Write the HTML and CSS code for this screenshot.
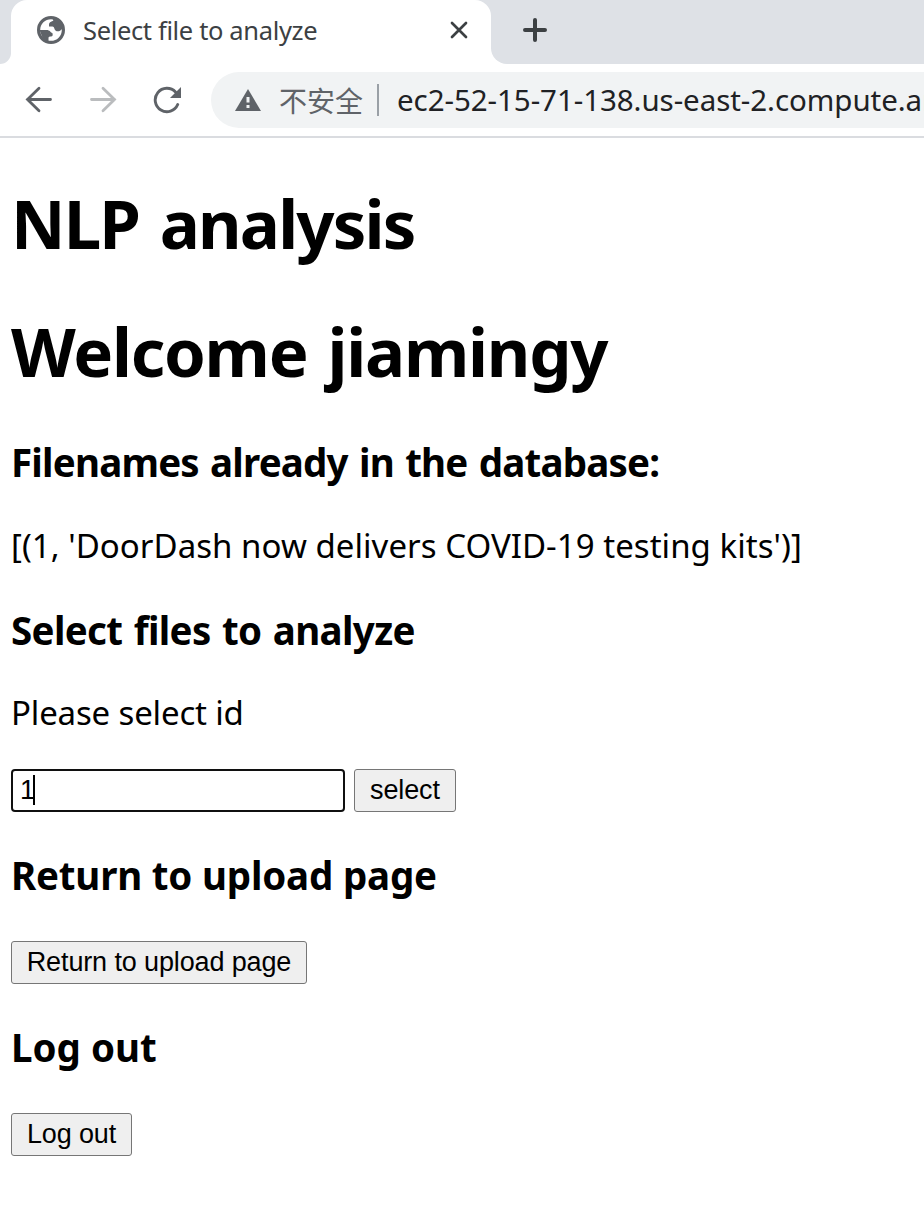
FILE: index.html
```html
<!DOCTYPE html>
<html lang="en">
<head>
<meta charset="utf-8">
<title>Select file to analyze</title>
<link rel="stylesheet" href="styles.css">
</head>
<body>
<header class="browser">
  <div class="strip">
    <div class="prev-tab"></div>
    <div class="tab">
      <svg class="globe" width="28" height="28" viewBox="0 0 28 28"><circle cx="14" cy="14" r="12.400" fill="#fff" stroke="#5f6368" stroke-width="3.200"/><path d="M15.500 2L16.300 4.800C13.500 5.500 12 6.800 12 8.500V10.500H15.500C17.500 10.500 17.200 13.500 18.500 14.500C20.500 16 23 15.500 25 13L26 8L21 3Z" fill="#5f6368"/><path d="M2.500 14H9.500C13 14 13.500 16.500 15.500 17.200C16 19.500 15.500 20.500 14 20.500C12 20.500 11.500 21 11.500 22V25.500L6 23Z" fill="#5f6368"/></svg>
      <span class="tab-title">Select file to analyze</span>
      <svg class="close" width="18" height="18" viewBox="0 0 18 18"><path d="M2 2L16 16M16 2L2 16" stroke="#3c4043" stroke-width="2.700" stroke-linecap="round"/></svg>
    </div>
    <div class="rest">
      <svg width="24" height="24" viewBox="0 0 24 24"><path d="M12 2V22M2 12H22" stroke="#3c4043" stroke-width="4" stroke-linecap="round"/></svg>
    </div>
  </div>
  <div class="toolbar">
    <svg class="nav" width="28" height="28" viewBox="0 0 28 28"><path d="M25.500 13.500H2.500M14 2.300L2.500 13.500L14 24.700" fill="none" stroke="#5f6368" stroke-width="2.800" stroke-linecap="round"/></svg>
    <svg class="nav" width="28" height="28" viewBox="0 0 28 28"><path d="M2.500 13.500H25.500M14 2.300L25.500 13.500L14 24.700" fill="none" stroke="#babcbe" stroke-width="2.800" stroke-linecap="round"/></svg>
    <svg class="nav" width="28" height="28" viewBox="0 0 28 28"><path d="M24.700 18.500A11.700 11.700 0 1 1 22.500 6" fill="none" stroke="#5f6368" stroke-width="2.900" stroke-linecap="round"/><path d="M28 1V12H17Z" fill="#5f6368"/></svg>
    <div class="address">
      <svg class="warn" width="26" height="22" viewBox="0 0 26 22"><path d="M13 0L26 22H0Z" fill="#5f6368"/><path d="M11.500 8H14.500V13.500H11.500ZM11.500 16H14.500V19H11.500Z" fill="#f1f3f4"/></svg>
      <span class="insecure">不安全</span>
      <span class="divider"></span>
      <span class="url">ec2-52-15-71-138.us-east-2.compute.am</span>
    </div>
  </div>
</header>
<main class="page">
  <h1 class="app-name">NLP analysis</h1>
  <h1 class="welcome">Welcome jiamingy</h1>
  <h3 class="h-files">Filenames already in the database:</h3>
  <p class="files">[(1, 'DoorDash now delivers COVID-19 testing kits')]</p>
  <h3 class="h-select">Select files to analyze</h3>
  <p class="prompt">Please select id</p>
  <form class="row"><div class="field"><span>1</span><i class="caret"></i></div><button type="button" class="btn w-select">select</button></form>
  <h3 class="h-return">Return to upload page</h3>
  <div class="row"><button type="button" class="btn w-return">Return to upload page</button></div>
  <h3 class="h-logout">Log out</h3>
  <div class="row"><button type="button" class="btn w-logout">Log out</button></div>
</main>
</body>
</html>
```
FILE: styles.css
```css
* { box-sizing: border-box; }
body { margin: 0; height: 1229px; overflow: hidden; background: #fff; color: #000; font-family: "Noto Sans", "Noto Sans CJK SC", sans-serif; }
svg { display: block; flex: none; }
.browser { height: 138px; border-bottom: 2px solid #dadce0; overflow: hidden; }
.strip { display: flex; height: 64px; background: linear-gradient(#dee1e6 0 32px, #fff 32px); }
.prev-tab { width: 11px; background: #dee1e6; border-bottom-right-radius: 16px; flex: none; }
.tab { width: 480px; flex: none; display: flex; align-items: center; padding: 0 23px 4px 26px; background: #fff; border-radius: 16px 16px 0 0; }
.tab-title { margin-left: 18px; font-size: 25.5px; line-height: 36px; color: #3c4043; white-space: nowrap; letter-spacing: -0.35px; }
.close { margin-left: auto; }
.rest { flex: 1; padding: 18px 0 0 32px; background: #dee1e6; border-bottom-left-radius: 16px; }
.toolbar { display: flex; align-items: center; height: 72px; padding-left: 25px; }
.nav { margin-right: 36px; }
.address { display: flex; align-items: center; flex: none; width: 760px; height: 56px; margin-left: -6px; padding-left: 24px; background: #f1f3f4; border-radius: 28px 0 0 28px; white-space: nowrap; }
.insecure { margin-left: 18px; font: 28px/40px "Noto Sans CJK SC", sans-serif; color: #5f6368; }
.divider { flex: none; width: 2px; height: 32px; margin: 0 18px 0 14px; background: #9aa0a6; }
.url { font-size: 29.5px; line-height: 40px; color: #202124; letter-spacing: -0.06px; }
.page { padding: 41px 0 0 11px; white-space: nowrap; }
h1, h3, p { margin: 0; }
h1 { font-size: 67px; line-height: 88px; margin-bottom: 40px; letter-spacing: -1.8px; word-spacing: 5px; }
.welcome { margin-bottom: 42px; letter-spacing: -1.25px; word-spacing: 4px; }
h3 { font-size: 38.500px; line-height: 50px; margin-bottom: 36px; letter-spacing: -0.8px; word-spacing: 2px; }
p { font-size: 33px; line-height: 44px; margin-bottom: 37px; }
.files { letter-spacing: 0.04px; }
.h-files { margin-bottom: 37px; }
.h-select { margin-bottom: 36px; letter-spacing: -0.65px; }
.prompt { margin-bottom: 34px; letter-spacing: -0.16px; }
.row { display: flex; height: 43px; margin: 0 0 38px; }
.h-return, .h-logout { margin-bottom: 41px; word-spacing: 0; }
.h-return { letter-spacing: -0.2px; }
.h-logout { letter-spacing: 0; }
.field { display: flex; align-items: center; width: 334px; height: 43px; margin-right: 9px; padding: 0 7px 2px; border: 2px solid #101010; border-radius: 4px; font: 27px/32px "Liberation Sans", Arial, sans-serif; }
.caret { width: 2px; height: 30px; margin-left: -2px; background: #000; }
.btn { height: 43px; padding: 0 0 2px; border: 1px solid #767676; border-radius: 3px; background: #efefef; color: #000; font: 27px/32px "Liberation Sans", Arial, sans-serif; letter-spacing: -0.13px; }
.w-select { width: 102px; }
.w-return { width: 296px; }
.w-logout { width: 121px; }
```
